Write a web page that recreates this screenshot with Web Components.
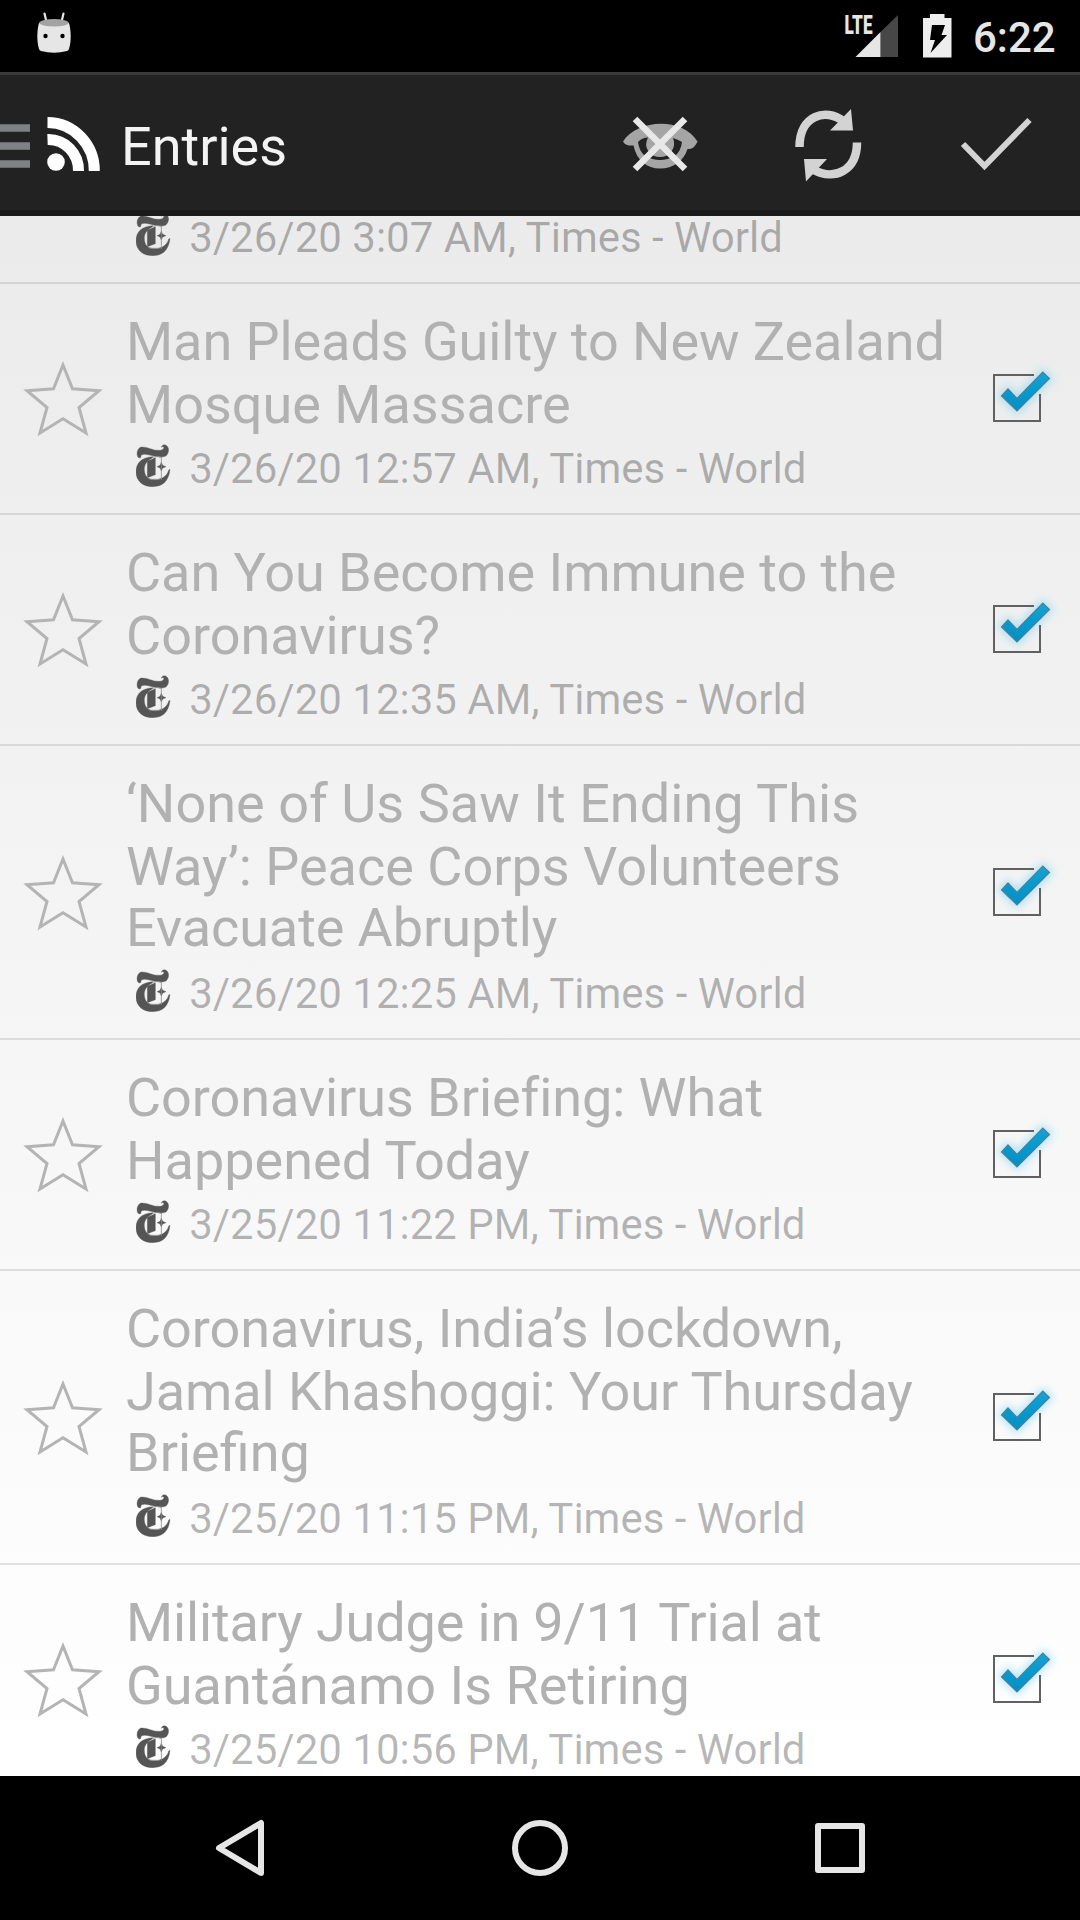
<!DOCTYPE html>
<html lang="en">
<head>
<meta charset="utf-8">
<title>Entries</title>
<style>
html, body { margin: 0; background: #000; font-family: Roboto, sans-serif; }
</style>
</head>
<body>
<feed-app></feed-app>
<script>
const define = (name, html) => customElements.define(name, class extends HTMLElement {
  constructor() {
    super();
    const t = document.createElement('template');
    t.innerHTML = html;
    this.attachShadow({ mode: 'open' }).append(t.content.cloneNode(true));
  }
});

define('status-bar', `
<style>
:host { display: flex; height: 72px; background: #000; color: #e6e6e6; align-items: stretch; }
svg { display: block; }
.gap { flex: 1; }
.time { width: 107px; font-size: 42px; font-weight: 500; line-height: 75px; }
</style>
<svg width="108" height="72" viewBox="0 0 108 72">
  <path d="M44.5 13.5L46.5 22M63.500 13.500L61.500 22" stroke="#e6e6e6" stroke-width="2.200" stroke-linecap="round"/>
  <path d="M39 23C37 30 36.500 41 39 49Q39.500 50.500 41 51Q54 54.500 67 51Q68.500 50.500 69 49C71.500 41 71 30 69 23Q54 18 39 23Z" fill="#e6e6e6"/>
  <ellipse cx="54" cy="22.800" rx="14.700" ry="3.700" fill="#a3a3a3"/>
  <circle cx="45.500" cy="36" r="2.200"/><circle cx="62.500" cy="36" r="2.200"/>
</svg>
<span class="gap"></span>
<svg width="133" height="72" viewBox="840 0 133 72">
  <text x="844.500" y="33.500" font-size="26" font-weight="900" textLength="28" lengthAdjust="spacingAndGlyphs" fill="#e6e6e6">LTE</text>
  <path d="M898 15V57H880.500V32Z" fill="#474747"/>
  <path d="M880.500 32V57H855.500Z" fill="#e6e6e6"/>
  <path d="M923 18H930V14H944.500V18H951.500V57.500H923Z" fill="#ededed"/>
  <path d="M932 25H945L941.500 35H947L930.500 53L935 40H930Z" fill="#000"/>
</svg>
<span class="time">6:22</span>
`);

define('action-bar', `
<style>
:host { display: flex; box-sizing: border-box; height: 144px; background: #222; border-top: 3px solid #3a3a3a; border-bottom: 6px solid #1a1a1a; color: #f3f3f3; }
svg { display: block; flex: none; }
.title { flex: 1; font-size: 54px; line-height: 144px; margin-left: 2px; }
</style>
<svg width="119" height="135" viewBox="0 75 119 135">
  <path d="M0 128H30M0 146H30M0 164H30" stroke="#808185" stroke-width="7.500"/>
  <circle cx="56" cy="162" r="8.800" fill="#fff"/>
  <path d="M47.500 139.500A30 31 0 0 1 78.500 171M47.500 122.500A47 48 0 0 1 94.300 171" fill="none" stroke="#fff" stroke-width="11"/>
</svg>
<span class="title"><slot></slot></span>
<svg width="168" height="135" viewBox="576 75 168 135">
  <path d="M623 141.500C638 119 682 117 697.500 141.500C695 147 692 149.500 687.500 149C684 161 673 168.500 660 168.500C647 168.500 637 161 633.500 145.500C629 146 625 145 623 141.500Z" fill="#a5a5a5"/>
  <path d="M638 142Q642 137.500 648 137.500Q644 145 648.500 151.500Q653 157 660 157Q667 157 671.500 151.500Q676 145 673 138Q679 140 682 142Q681 151 675 156Q660 164 645 156Q639 151 638 142Z" fill="#222"/>
  <path d="M635 119L685 169M685 119L635 169" stroke="#e8e8e8" stroke-width="6.500"/>
</svg>
<svg width="168" height="135" viewBox="744 75 168 135">
  <path d="M799.500 147C799.500 115 826 108 843 121M857 142.500C857 171 834 181 814 170" fill="none" stroke="#d3d3d3" stroke-width="8.500"/>
  <path d="M851 109L853 130.500H830Z M806 181.500L804 159H827Z" fill="#d3d3d3"/>
</svg>
<svg width="168" height="135" viewBox="912 75 168 135">
  <path d="M963 144L984.500 166L1029.500 120" fill="none" stroke="#d3d3d3" stroke-width="6"/>
</svg>
`);

define('star-toggle', `
<style>:host { display: block; } svg { display: block; }</style>
<svg width="126" height="96" viewBox="0 350 126 96">
  <path d="M63 365L72.500 388.700L99 390.700L79 407.500L86 433L63 418.700L40 433L47 407.500L27 390.700L53.500 388.700Z" fill="none" stroke="#b4b4b4" stroke-width="3"/>
</svg>
`);

define('read-check', `
<style>:host { display: block; } svg { display: block; overflow: visible; }</style>
<svg width="96" height="96" viewBox="969 350 96 96">
  <defs>
    <filter id="glow" x="-40%" y="-40%" width="180%" height="180%"><feGaussianBlur stdDeviation="4.500"/></filter>
    <linearGradient id="blue" x1="0" y1="0" x2="0" y2="1"><stop offset="0" stop-color="#18a2d3"/><stop offset=".5" stop-color="#0599cf"/><stop offset="1" stop-color="#078fc2"/></linearGradient>
  </defs>
  <path d="M1001 396L1008 388.500L1017 398L1043 371.500L1050 378.500L1017 411.500Z" fill="#6ccdf2" stroke="#6ccdf2" stroke-width="5" opacity=".5" filter="url(#glow)"/>
  <path d="M1034 375H994V421H1040V394" fill="none" stroke="#616161" stroke-width="2"/>
  <path d="M1001.500 396L1008 389L1017 398.500L1042.800 372L1049.500 378.500L1017 411Z" fill="url(#blue)" stroke="#4b8195" stroke-width="1.200"/>
</svg>
`);

define('feed-logo', `
<style>:host { display: block; } svg { display: block; }</style>
<svg width="34.700" height="43" viewBox="48 42 104 129">
  <g fill="#555" stroke="#555" stroke-width="1">
    <path d="M54 82C49 74 50 56 63 51C80 49 98 62 118 61C129 60 134 54 130 50Q127 48 124 52C125 44 134 42 140 47C149 54 147 72 136 79C120 86 92 74 74 73C65 73 61 77 63 82L59 84Z"/>
    <path d="M98 80C64 82 48 99 48 126C48 153 68 170 98 170C126 170 146 156 150 118L146 120C142 136 128 147 110 149C86 150 74 141 73 119C73 103 80 92 98 83Z"/>
    <path d="M82 94L106 83V134L82 143Z"/>
    <path d="M124 97L128 106L138 110L128 114L124 123L120 114L111 110L120 106Z"/>
  </g>
  <path d="M124 80V150M96 82Q112 76 124 82M83 142L90 148H117L124 144" fill="none" stroke="#8d8d8d" stroke-width="2.500"/>
</svg>
`);

define('feed-entry', `
<style>
:host { display: flex; align-items: center; flex: none; border-bottom: 2px solid rgba(0,0,0,.1); }
star-toggle { flex: none; width: 126px; margin-bottom: 1px; }
.body { flex: 1; padding: 26px 0 20px; }
.title { display: flow-root; font-size: 54px; line-height: 63px; color: #b1b1b1; white-space: nowrap; }
::slotted(p) { display: block; margin: 0; height: 63px; letter-spacing: var(--track, 0); }
::slotted(p:nth-of-type(3)) { margin: -2px 0 2px; }
.meta { display: flex; align-items: flex-start; margin-top: 8px; height: 49px; padding-left: 10px; font-size: 42px; line-height: 49px; color: rgba(0,0,0,.28); white-space: nowrap; }
.meta span { margin-left: 18.500px; }
read-check { flex: none; width: 96px; margin: 0 15px 1px 0; }
</style>
<star-toggle></star-toggle>
<div class="body">
  <div class="title"><slot></slot></div>
  <div class="meta"><feed-logo></feed-logo><span><slot name="meta"></slot></span></div>
</div>
<read-check></read-check>
`);

define('entry-list', `
<style>
:host { display: flex; flex-direction: column; justify-content: flex-start; height: 1560px; overflow: hidden; background: linear-gradient(#ebebeb, #fff); }
.scroll { display: flex; flex-direction: column; margin-top: -163px; }
</style>
<div class="scroll"><slot></slot></div>
`);

define('nav-bar', `
<style>
:host { display: flex; justify-content: center; height: 144px; background: #000; }
svg { display: block; width: 300px; height: 144px; fill: none; stroke: #e6e6e6; stroke-width: 6; stroke-linejoin: round; }
</style>
<svg viewBox="90 1776 300 144"><path d="M261 1823V1873L219 1848Z"/></svg>
<svg viewBox="390 1776 300 144"><circle cx="540" cy="1848" r="25"/></svg>
<svg viewBox="690 1776 300 144"><rect x="818" y="1826" width="44" height="44"/></svg>
`);

define('feed-app', `
<style>
:host { display: flex; flex-direction: column; width: 1080px; height: 1920px; overflow: hidden; }
.t1 { --track: -.04px; } .t2 { --track: -.07px; } .t3 { --track: -.15px; } .w { --track: .04px; }
</style>
<status-bar></status-bar>
<action-bar>Entries</action-bar>
<entry-list>
  <feed-entry><p></p><p></p><span slot="meta">3/26/20 3:07 AM, Times - World</span></feed-entry>
  <feed-entry><p class="t2">Man Pleads Guilty to New Zealand</p><p>Mosque Massacre</p><span slot="meta">3/26/20 12:57 AM, Times - World</span></feed-entry>
  <feed-entry><p class="t1">Can You Become Immune to the</p><p>Coronavirus?</p><span slot="meta">3/26/20 12:35 AM, Times - World</span></feed-entry>
  <feed-entry><p class="w">‘None of Us Saw It Ending This</p><p>Way’: Peace Corps Volunteers</p><p class="t2">Evacuate Abruptly</p><span slot="meta">3/26/20 12:25 AM, Times - World</span></feed-entry>
  <feed-entry><p class="t2">Coronavirus Briefing: What</p><p>Happened Today</p><span slot="meta">3/25/20 11:22 PM, Times - World</span></feed-entry>
  <feed-entry><p class="t2">Coronavirus, India’s lockdown,</p><p class="t2">Jamal Khashoggi: Your Thursday</p><p>Briefing</p><span slot="meta">3/25/20 11:15 PM, Times - World</span></feed-entry>
  <feed-entry><p class="t3">Military Judge in 9/11 Trial at</p><p>Guantánamo Is Retiring</p><span slot="meta">3/25/20 10:56 PM, Times - World</span></feed-entry>
</entry-list>
<nav-bar></nav-bar>
`);
</script>
</body>
</html>
